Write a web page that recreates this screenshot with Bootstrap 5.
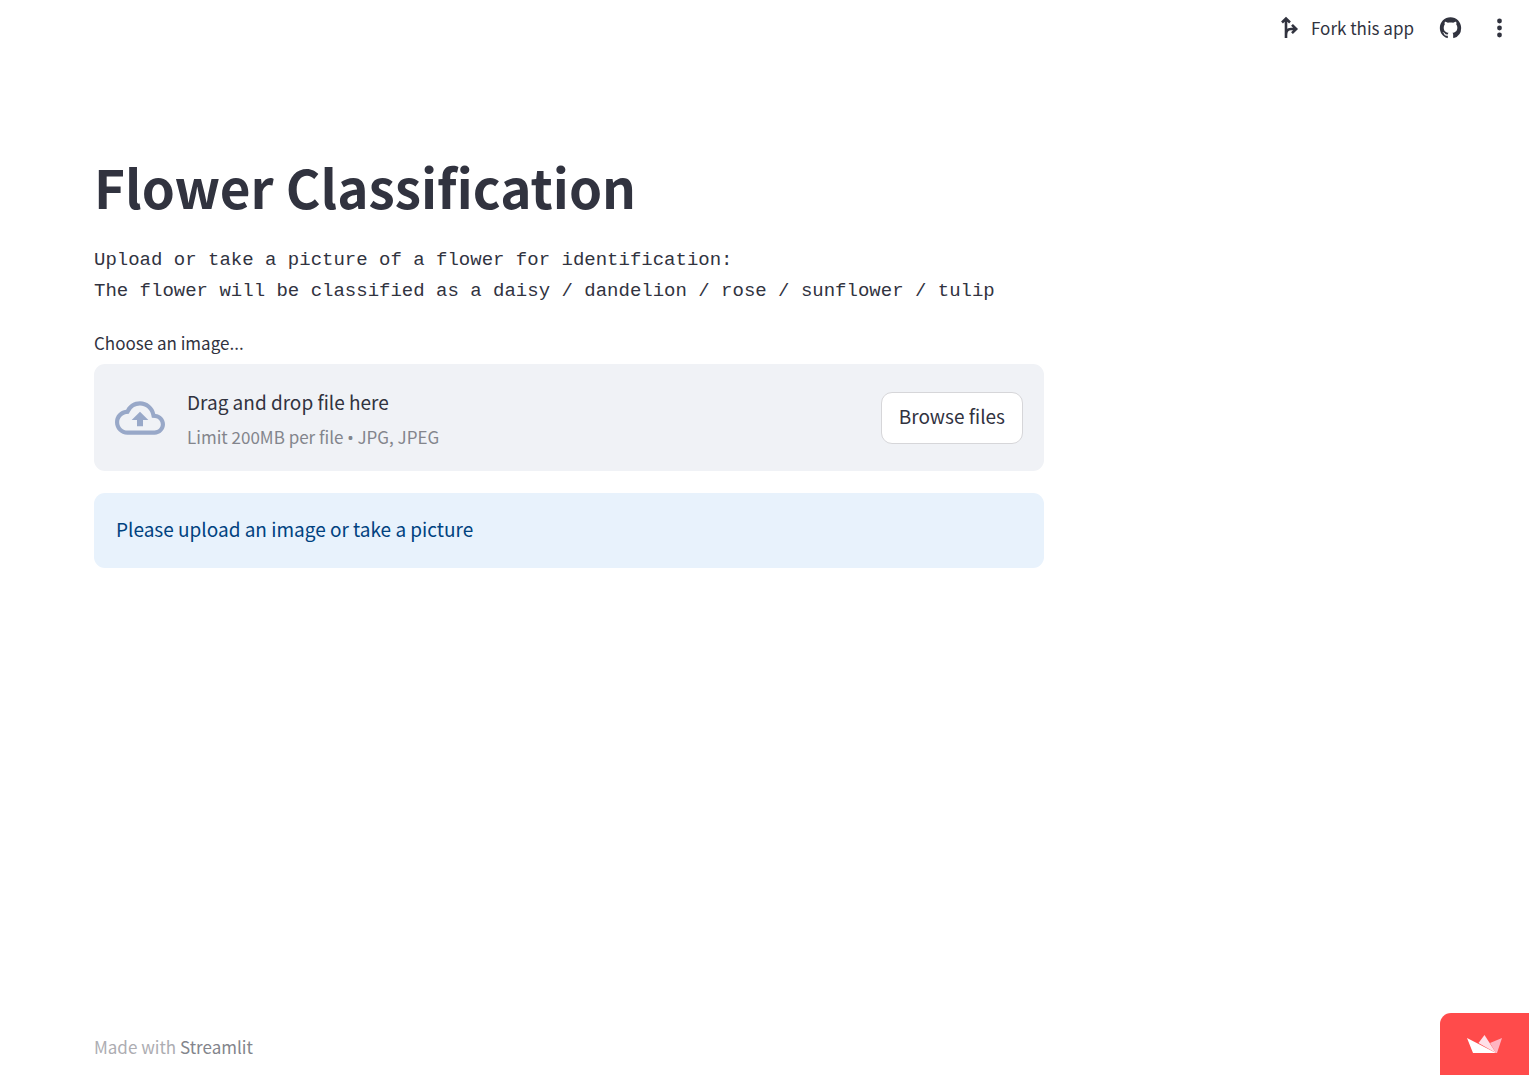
<!DOCTYPE html>
<html lang="en">
<head>
<meta charset="utf-8">
<meta name="viewport" content="width=device-width, initial-scale=1">
<title>Flower Classification</title>
<link href="https://cdn.jsdelivr.net/npm/bootstrap@5.3.0/dist/css/bootstrap.min.css" rel="stylesheet">
<style>
  body { font-family: "Noto Sans CJK SC", "Noto Sans", sans-serif; font-size: 19px; line-height: 32px; color: #31333f; }
  .toolbar { height: 55px; padding-right: 18px; gap: 16px; }
  .tool-btn { color: #31333f; font-size: 17px; line-height: 24px; gap: 12px; --bs-btn-border-width: 0px; }
  .page-body { max-width: 1138px; padding: 99px 94px 0; }
  .app-title { font-size: 53px; line-height: 64px; font-weight: 700; margin-bottom: 27px; }
  .intro { font-family: "Liberation Mono", monospace; font-size: 19px; line-height: 31px; margin-bottom: 22px; white-space: pre-wrap; overflow: visible; }
  .text-label { font-size: 17px; line-height: 28px; margin-bottom: 7px; }
  .dropzone { background: #f0f2f6; border-radius: 11px; padding: 19px 21px; min-height: 107px; gap: 22px; }
  .drop-text { padding-top: 3px; }
  .limit-note { font-size: 17px; line-height: 28px; margin-top: 5px; color: #83858c; }
  .limit-note span { font-family: "Noto Sans", sans-serif; }
  .browse-btn { font-size: 19px; line-height: 30px; color: #31333f; background: #fff; padding: 8px 17px 12px; border: 1px solid #d6d6d9; border-radius: 11px; }
  .notice { background: #e8f2fc; color: #004280; border: 0; border-radius: 11px; padding: 20px 22px 23px; margin-top: 22px; }
  .page-foot { padding: 0 94px 14px; font-size: 17px; line-height: 28px; color: #adadb2; }
  .page-foot a { color: #83858c; }
  .host-badge { background: #ff4b4b; width: 89px; height: 62px; border-top-left-radius: 11px; }
</style>
<script src="https://cdn.jsdelivr.net/npm/bootstrap@5.3.0/dist/js/bootstrap.bundle.min.js"></script>
</head>
<body class="bg-white min-vh-100 d-flex flex-column">
<header class="toolbar d-flex justify-content-end align-items-center">
  <button type="button" class="btn tool-btn d-flex align-items-center p-0 me-2">
    <svg width="20" height="24" viewBox="0 0 20 24" fill="none" stroke="currentColor" stroke-width="2.6" aria-hidden="true"><path d="M7 22V3M3 6.500l4-4 4 4M7 19c0-4 2-6 5-6h5M13 8.800l4.200 4.200-4.200 4.200"/></svg>
    <span>Fork this app</span>
  </button>
  <button type="button" class="btn tool-btn p-0 d-flex" aria-label="View source on GitHub">
    <svg width="25" height="24" viewBox="-1 -1 18 18" fill="currentColor" aria-hidden="true"><path d="M8 0C3.580 0 0 3.580 0 8c0 3.540 2.290 6.530 5.470 7.590.4.070.550-.170.550-.380 0-.190-.010-.820-.010-1.490-2.010.370-2.530-.490-2.690-.940-.090-.230-.480-.940-.820-1.130-.280-.150-.680-.520-.010-.530.630-.010 1.080.580 1.230.820.720 1.210 1.870.870 2.330.660.070-.520.280-.870.510-1.070-1.780-.200-3.640-.890-3.640-3.950 0-.870.310-1.590.820-2.150-.080-.200-.360-1.020.080-2.120 0 0 .670-.210 2.200.820.640-.180 1.320-.270 2-.270s1.360.090 2 .270c1.530-1.040 2.200-.820 2.200-.820.440 1.100.160 1.920.080 2.120.510.560.820 1.270.820 2.150 0 3.070-1.870 3.750-3.650 3.950.290.250.540.730.540 1.480 0 1.070-.010 1.930-.010 2.200 0 .210.150.460.550.380A8.010 8.010 0 0 0 16 8c0-4.420-3.580-8-8-8z"/></svg>
  </button>
  <button type="button" class="btn tool-btn p-0 d-flex ms-2" aria-label="Main menu">
    <svg width="24" height="24" viewBox="0 0 24 24" fill="currentColor" aria-hidden="true"><circle cx="12.500" cy="5" r="2.400"/><circle cx="12.500" cy="12" r="2.400"/><circle cx="12.500" cy="19" r="2.400"/></svg>
  </button>
</header>

<main class="page-body w-100 flex-grow-1">
  <h1 class="app-title">Flower Classification</h1>
  <pre class="intro">Upload or take a picture of a flower for identification:
The flower will be classified as a daisy / dandelion / rose / sunflower / tulip</pre>
  <label for="image-file" class="text-label d-block">Choose an image...</label>
  <section class="dropzone d-flex align-items-center">
    <input type="file" id="image-file" class="d-none" accept=".jpg,.jpeg">
    <svg class="flex-shrink-0" width="50" height="50" viewBox="0 0 24 24" fill="#98a8c8" aria-hidden="true"><path d="M19.350 10.040A7.490 7.490 0 0 0 12 4C9.110 4 6.600 5.640 5.350 8.040A5.994 5.994 0 0 0 0 14c0 3.310 2.690 6 6 6h13c2.760 0 5-2.240 5-5 0-2.640-2.050-4.780-4.650-4.960zM19 18H6c-2.210 0-4-1.790-4-4 0-2.050 1.530-3.760 3.560-3.970l1.070-.110.5-.950A5.469 5.469 0 0 1 12 6c2.620 0 4.880 1.860 5.390 4.430l.3 1.500 1.530.110A2.980 2.980 0 0 1 22 15c0 1.650-1.350 3-3 3zM8 13h2.550v3h2.900v-3H16l-4-4z"/></svg>
    <div class="drop-text flex-grow-1">
      <div>Drag and drop file here</div>
      <div class="limit-note">Limit 200MB per file <span>•</span> JPG, JPEG</div>
    </div>
    <button type="button" class="btn browse-btn flex-shrink-0" onclick="document.getElementById('image-file').click()">Browse files</button>
  </section>
  <div class="alert notice mb-0" role="alert">Please upload an image or take a picture</div>
</main>

<footer class="page-foot">Made with <a href="#" class="text-decoration-none">Streamlit</a></footer>
<a href="#" class="host-badge position-fixed bottom-0 end-0 d-flex align-items-center justify-content-center" aria-label="Hosted with Streamlit">
  <svg width="36" height="20" viewBox="0 0 36 20" aria-hidden="true"><path fill="#ffb4c2" d="M35 4L23 9l6 10h1z"/><path fill="#ffe0e8" d="M17.500 1L11.500 9 29 19z"/><path fill="#fff" d="M0 4l29 15H6z"/></svg>
</a>
</body>
</html>
